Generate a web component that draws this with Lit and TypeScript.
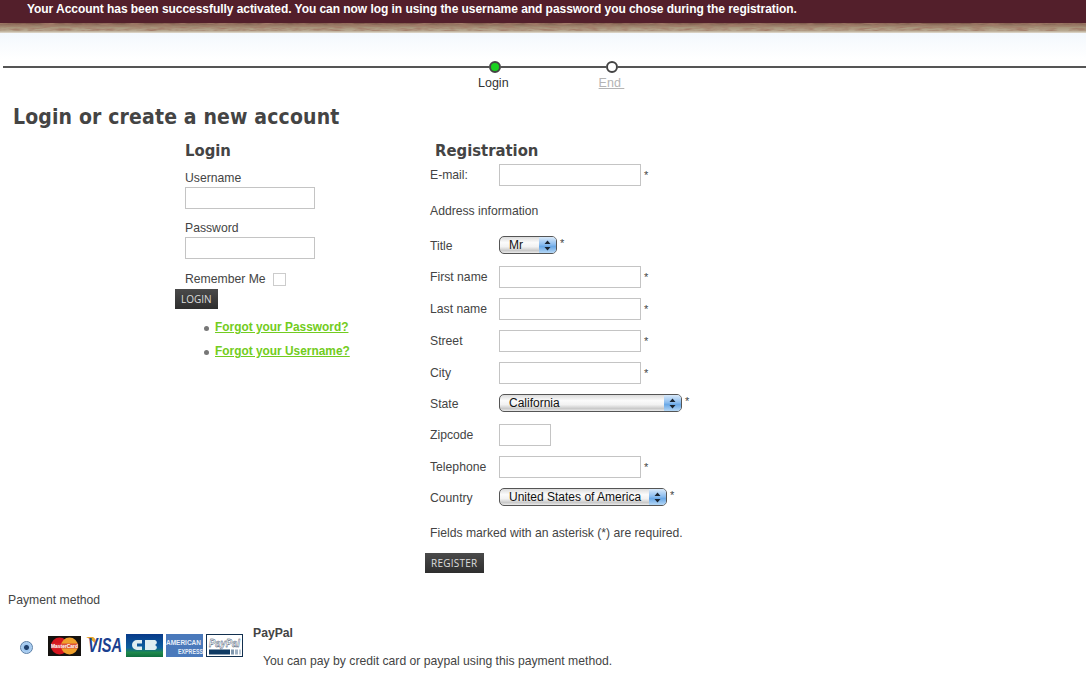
import { LitElement, css, html } from "lit";
import { customElement } from "lit/decorators.js";

const inputRows: [string, number][] = [
  ["First name", 142],
  ["Last name", 142],
  ["Street", 142],
  ["City", 142],
];

@customElement("app-root")
export class AppRoot extends LitElement {
  renderSelect(label: string, cls: string) {
    return html`<span class="select ${cls}"
      ><span class="select-text">${label}</span>
      <span class="select-btn">
        <svg width="7" height="11" viewBox="0 0 7 11">
          <path d="M3.5 0.5 L6.5 4 H0.5 Z M0.5 7 H6.5 L3.5 10.5 Z" fill="#1a2430"></path>
        </svg>
      </span></span
    >`;
  }

  renderRow(label: string, width: number, required = true) {
    return html`<div class="row">
      <label>${label}</label>
      <span class="input" style="width:${width}px"></span>
      ${required ? html`<span class="star">*</span>` : ""}
    </div>`;
  }

  renderSelectRow(label: string, value: string, cls: string) {
    return html`<div class="row sel">
      <label>${label}</label>
      ${this.renderSelect(value, cls)}
      <span class="star">*</span>
    </div>`;
  }

  renderCards() {
    return html`
      <svg class="card mc-card" width="33" height="20" viewBox="0 0 33 20">
        <rect width="33" height="20" fill="#15120f"></rect>
        <circle cx="11.5" cy="10" r="8.5" fill="#d5161f"></circle>
        <circle cx="21.5" cy="10" r="8.5" fill="#efa02c"></circle>
        <rect x="3" y="7.5" width="27" height="5" fill="#d5303a" opacity=".7"></rect>
        <text x="3" y="12.2" class="mc" textLength="27" lengthAdjust="spacingAndGlyphs">MasterCard</text>
      </svg>
      <svg class="card" width="37" height="21" viewBox="0 0 37 21">
        <rect width="37" height="21" fill="#fff"></rect>
        <path d="M0 2 H7 Q10 3 11 11 Q7 5 0 2 Z" fill="#e9a52f"></path>
        <text x="2" y="17" class="visa" textLength="34" lengthAdjust="spacingAndGlyphs">VISA</text>
      </svg>
      <svg class="card" width="37" height="23" viewBox="0 0 37 23">
        <defs>
          <linearGradient id="cb" x1="0" y1="0" x2="0" y2="1">
            <stop offset="0" stop-color="#083a8a"></stop>
            <stop offset=".6" stop-color="#0b5f9e"></stop>
            <stop offset=".8" stop-color="#1f8a4c"></stop>
            <stop offset="1" stop-color="#0f6f3f"></stop>
          </linearGradient>
        </defs>
        <rect width="37" height="23" fill="url(#cb)"></rect>
        <path
          d="M16 6 H11 a5 5 0 0 0 0 10 H16 V12.5 H11 V9.5 H16 Z M19 6 H29 a2.6 2.6 0 0 1 0 5 a2.6 2.6 0 0 1 0 5 H19 Z"
          fill="#dfeef0"
        ></path>
      </svg>
      <svg class="card" width="37" height="23" viewBox="0 0 37 23">
        <rect width="37" height="23" fill="#4a79bb"></rect>
        <text x="0" y="11" class="amex" textLength="35" lengthAdjust="spacingAndGlyphs">AMERICAN</text>
        <text x="12" y="20" class="amex" textLength="25" lengthAdjust="spacingAndGlyphs">EXPRESS</text>
      </svg>
      <svg class="card" width="37" height="23" viewBox="0 0 37 23">
        <rect x=".5" y=".5" width="36" height="22" fill="#fff" stroke="#12304f"></rect>
        <text x="3" y="12.5" class="pp" textLength="31" lengthAdjust="spacingAndGlyphs">PayPal</text>
        <rect x="3" y="15.5" width="21" height="5" fill="#0f3a63"></rect>
        <rect x="25" y="15.5" width="3" height="5" fill="#7f97ad"></rect>
        <rect x="29" y="15.5" width="3" height="5" fill="#9fb2c4"></rect>
        <rect x="33" y="15.5" width="2" height="5" fill="#bccad6"></rect>
      </svg>
    `;
  }

  render() {
    return html`
      <div class="notice">Your Account has been successfully activated. You can now log in using the username and password you chose during the registration.</div>
      <svg class="stone" width="1086" height="10" aria-hidden="true">
        <defs>
          <filter id="grain">
            <feTurbulence type="fractalNoise" baseFrequency="0.07 0.5" numOctaves="3" seed="4"></feTurbulence>
            <feColorMatrix
              values="0 0 0 0 0.36  0 0 0 0 0.2  0 0 0 0 0.14  2.2 0 0 0 -0.75"
            ></feColorMatrix>
          </filter>
          <linearGradient id="fade" x1="0" y1="0" x2="0" y2="1">
            <stop offset="0" stop-color="#7c5648"></stop>
            <stop offset=".45" stop-color="#a8967c"></stop>
            <stop offset=".8" stop-color="#b9ab94"></stop>
            <stop offset="1" stop-color="#e2dcd0"></stop>
          </linearGradient>
        </defs>
        <rect width="1086" height="10" fill="url(#fade)"></rect>
        <rect width="1086" height="7" filter="url(#grain)"></rect>
      </svg>
      <div class="sky">
        <div class="track">
          <i class="line first"></i><i class="dot on"></i><i class="line mid"></i><i class="dot"></i
          ><i class="line rest"></i>
        </div>
        <div class="steps">
          <span>Login</span>
          <a>End&nbsp;</a>
        </div>
      </div>

      <h1>Login or create a new account</h1>

      <div class="columns">
        <section class="login">
          <h2>Login</h2>
          <div class="field">
            <label>Username</label>
            <span class="input wide"></span>
          </div>
          <div class="field">
            <label>Password</label>
            <span class="input wide"></span>
          </div>
          <div class="remember">Remember Me <span class="check"></span></div>
          <span class="btn">LOGIN</span>
          <ul>
            <li><a>Forgot your Password?</a></li>
            <li><a>Forgot your Username?</a></li>
          </ul>
        </section>

        <section class="register">
          <h2>Registration</h2>
          ${this.renderRow("E-mail:", 142)}
          <div class="address">Address information</div>
          <div class="rows">
            ${this.renderSelectRow("Title", "Mr", "s-title")}
            ${inputRows.map(([l, w]) => this.renderRow(l, w))}
            ${this.renderSelectRow("State", "California", "s-state")}
            ${this.renderRow("Zipcode", 52, false)}
            ${this.renderRow("Telephone", 142)}
            ${this.renderSelectRow("Country", "United States of America", "s-country")}
          </div>
          <div class="note">Fields marked with an asterisk (*) are required.</div>
          <span class="btn">REGISTER</span>
        </section>
      </div>

      <div class="pay-title">Payment method</div>
      <div class="pay">
        <span class="radio"></span>
        <div class="cards">${this.renderCards()}</div>
        <div class="pay-info">
          <strong>PayPal</strong>
          <p>You can pay by credit card or paypal using this payment method.</p>
        </div>
      </div>
    `;
  }

  static styles = css`
    :host {
      display: block;
      height: 699px;
      overflow: hidden;
      background: #fff;
      color: #444;
      font-family: "Liberation Sans", Arial, sans-serif;
      font-size: 12.2px;
    }

    .notice {
      height: 23px;
      box-sizing: border-box;
      padding: 2px 0 0 27px;
      background: #531f2b;
      color: #fff;
      font-weight: bold;
      font-size: 12px;
      letter-spacing: -0.05px;
      line-height: 15px;
      white-space: nowrap;
    }

    .stone {
      display: block;
    }

    .sky {
      height: 56px;
      padding-top: 28px;
      box-sizing: border-box;
      background: linear-gradient(#f3f8fd, #fff 26px);
    }

    .track {
      display: flex;
      align-items: center;
      height: 12px;
      padding-left: 3px;
    }

    .line {
      height: 2px;
      background: #555;
    }

    .line.first {
      width: 486px;
    }

    .line.mid {
      width: 105px;
    }

    .line.rest {
      flex: 1;
    }

    .dot {
      width: 8px;
      height: 8px;
      border: 2px solid #444;
      border-radius: 50%;
      background: #fff;
    }

    .dot.on {
      background: #19d11f;
    }

    .steps {
      display: flex;
      gap: 90px;
      padding: 3px 0 0 478px;
      font-size: 12.5px;
      line-height: 14px;
      color: #333;
    }

    .steps a {
      color: #b4b4b4;
      text-decoration: underline;
    }

    h1,
    h2 {
      margin: 0;
      font-family: "DejaVu Sans", sans-serif;
      font-stretch: condensed;
      font-weight: bold;
      color: #444;
    }

    h1 {
      padding: 15px 0 0 13px;
      font-size: 21px;
      line-height: 26px;
      letter-spacing: 0.15px;
    }

    h2 {
      font-size: 16.5px;
      line-height: 20px;
    }

    .columns {
      display: flex;
      padding: 11px 0 0 175px;
    }

    .login {
      width: 250px;
    }

    .login h2 {
      padding-left: 10px;
    }

    .field {
      display: flex;
      flex-direction: column;
      padding: 10px 0 0 10px;
    }

    .field label {
      line-height: 14px;
      padding-bottom: 2px;
    }

    .field + .field {
      padding-top: 12px;
    }

    .input {
      display: inline-block;
      box-sizing: border-box;
      height: 22px;
      border: 1px solid #c4c4c4;
      background: #fff;
    }

    .input.wide {
      width: 130px;
    }

    .remember {
      display: flex;
      align-items: center;
      gap: 7px;
      padding: 13px 0 0 10px;
      height: 14px;
    }

    .check {
      width: 11px;
      height: 11px;
      border: 1px solid #ccc;
    }

    .btn {
      display: inline-block;
      padding: 0 6px;
      height: 20px;
      line-height: 20px;
      background: linear-gradient(#4a4a4a, #2e2e2e);
      color: #ddd;
      font-family: "Open Sans", sans-serif;
      font-size: 10px;
    }

    .login .btn {
      margin-top: 3px;
    }

    ul {
      margin: 11px 0 0;
      padding: 0 0 0 29px;
      list-style: none;
    }

    li {
      display: flex;
      align-items: center;
      gap: 6px;
      height: 14px;
      margin-bottom: 10px;
    }

    li::before {
      content: "";
      width: 5px;
      height: 5px;
      margin-top: 2px;
      border-radius: 50%;
      background: #777;
    }

    li a {
      color: #72cc20;
      font-size: 11.9px;
      font-weight: bold;
      text-decoration: underline;
    }

    .register {
      width: 400px;
    }

    .register h2 {
      padding-left: 10px;
      height: 23px;
    }

    .register > .row,
    .address,
    .rows,
    .note {
      margin-left: 5px;
    }

    .row {
      display: flex;
      align-items: center;
      height: 22px;
    }

    .row label {
      width: 69px;
    }

    .star {
      margin-left: 3px;
      font-size: 11px;
    }

    .row.sel {
      height: 20px;
      align-items: flex-start;
    }

    .row.sel label {
      padding-top: 3px;
    }

    .row.sel .star {
      padding-top: 1px;
    }

    .address {
      padding-top: 18px;
      line-height: 14px;
    }

    .rows {
      display: flex;
      flex-direction: column;
      gap: 10px;
      padding-top: 18px;
    }

    .select {
      display: inline-flex;
      box-sizing: border-box;
      height: 18px;
      border: 1px solid #555;
      border-radius: 5px;
      overflow: hidden;
      background: linear-gradient(#dcdcdc, #fbfbfb 35%, #f2f2f2 60%, #c9c9c9 85%, #ececec);
      color: #111;
      font-family: "Liberation Sans", sans-serif;
      font-size: 12px;
      line-height: 16px;
    }

    .select-text {
      flex: 1;
      padding-left: 9px;
      white-space: nowrap;
      overflow: hidden;
    }

    .select-btn {
      display: flex;
      align-items: center;
      justify-content: center;
      width: 17px;
      background: linear-gradient(#d9e9f9, #8fbff0 45%, #6aa8e6 60%, #b5d7f5);
    }

    .s-title {
      width: 58px;
    }

    .s-state {
      width: 183px;
    }

    .s-country {
      width: 168px;
    }

    .note {
      padding-top: 18px;
      line-height: 14px;
    }

    .register .btn {
      margin-top: 13px;
      letter-spacing: 0.25px;
    }

    .pay-title {
      padding: 20px 0 0 8px;
      line-height: 14px;
    }

    .pay {
      display: flex;
      padding: 19px 0 0 20px;
    }

    .radio {
      width: 13px;
      height: 13px;
      margin-top: 15px;
      border-radius: 50%;
      border: 1px solid #5a7fa8;
      box-sizing: border-box;
      background: radial-gradient(circle, #1f3f6b 0 2px, #9cc5ee 3px, #c8e0f6);
    }

    .cards {
      display: flex;
      align-items: center;
      gap: 3px;
      height: 23px;
      margin: 8px 0 0 15px;
    }

    .card {
      display: block;
      overflow: visible;
    }

    .mc-card {
      margin-right: 2px;
    }

    .mc {
      font: bold 6px "Liberation Sans", sans-serif;
      fill: #fff;
    }

    .visa {
      font: italic bold 20px "Liberation Sans", sans-serif;
      fill: #1a3f8f;
    }

    .amex {
      font: bold 7.5px "Liberation Sans", sans-serif;
      fill: #e6eef8;
    }

    .pp {
      font: italic bold 11px "Liberation Sans", sans-serif;
      fill: #fff;
      stroke: #12304f;
      stroke-width: 0.4px;
    }

    .pay-info {
      padding: 0 0 0 10px;
    }

    .pay-info strong {
      display: block;
      line-height: 14px;
    }

    .pay-info p {
      margin: 14px 0 0 10px;
      line-height: 14px;
    }
  `;
}
